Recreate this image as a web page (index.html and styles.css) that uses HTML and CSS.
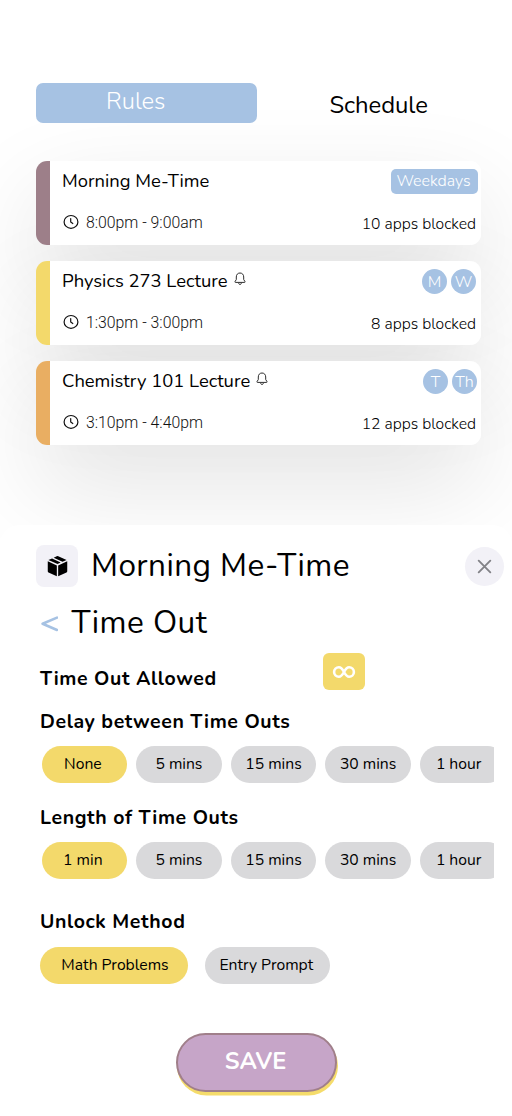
FILE: index.html
```html
<!DOCTYPE html>
<html lang="en">
<head>
<meta charset="utf-8">
<title>Rules</title>
<link rel="stylesheet" href="styles.css">
</head>
<body>
<svg class="defs" width="0" height="0">
  <symbol id="clock" viewBox="0 0 16 16"><ellipse cx="8" cy="7.9" rx="6.900" ry="6.4" fill="none" stroke="#111" stroke-width="1.2"/><path d="M7.7 4.5v3.4l2.1 1.6" fill="none" stroke="#111" stroke-width="1.2" stroke-linecap="round"/></symbol>
  <symbol id="bell" viewBox="0 0 12 14"><path d="M6 1C3.700 1 2.300 2.700 2.300 5v2.500L1 9.600c-.2.500 0 .8.500.8h9c.5 0 .7-.3.500-.8L9.700 7.500V5C9.700 2.700 8.300 1 6 1zM4.400 11.400c.3 1.200 2.900 1.200 3.200 0" fill="none" stroke="#222" stroke-width=".95" stroke-linejoin="round"/></symbol>
</svg>
<main class="screen">
  <nav class="tabs">
    <a class="tab tab-active">Rules</a>
    <a class="tab">Schedule</a>
  </nav>
  <section class="cards">
    <article class="card mauve">
      <h2 class="card-title">Morning Me-Time</h2>
      <div class="days"><span class="chip">Weekdays</span></div>
      <p class="time"><svg class="clock"><use href="#clock"/></svg>8:00pm - 9:00am</p>
      <p class="apps">10 apps blocked</p>
    </article>
    <article class="card yellow">
      <h2 class="card-title">Physics 273 Lecture<svg class="bell"><use href="#bell"/></svg></h2>
      <div class="days two"><span class="day">M</span><span class="day">W</span></div>
      <p class="time"><svg class="clock"><use href="#clock"/></svg>1:30pm - 3:00pm</p>
      <p class="apps">8 apps blocked</p>
    </article>
    <article class="card orange">
      <h2 class="card-title">Chemistry 101 Lecture<svg class="bell"><use href="#bell"/></svg></h2>
      <div class="days three"><span class="day">T</span><span class="day">Th</span></div>
      <p class="time"><svg class="clock"><use href="#clock"/></svg>3:10pm - 4:40pm</p>
      <p class="apps">12 apps blocked</p>
    </article>
  </section>
  <section class="sheet">
    <header class="sheet-head">
      <span class="box"><svg width="21" height="22" viewBox="0 0 22 23"><path d="M.8 6.600L10.300 10.900V22.200L1.600 18.200Q.8 17.800.8 17zM21.200 6.600L11.700 10.900V22.200L20.400 18.200Q21.200 17.800 21.200 17zM1.500 5.300L5.300 3.600 14.300 7.900 11 9.500zM7 2.800L10.200 1.200Q11 .8 11.800 1.200L20.500 5.300 16.200 7.100z" fill="#000"/></svg></span>
      <h1 class="sheet-title">Morning Me-Time</h1>
      <button class="close" aria-label="Close"><svg width="15" height="15" viewBox="0 0 16 16"><path d="M1.800 1.800l12.400 12.400M14.200 1.800L1.800 14.200" stroke="#828287" stroke-width="2" stroke-linecap="round"/></svg></button>
    </header>
    <div class="sub">
      <svg class="back" width="18" height="16" viewBox="0 0 18 16"><path d="M17 1.600L2.600 7.800l14.400 6.200" fill="none" stroke="#a6c2e3" stroke-width="2.600" stroke-linecap="round" stroke-linejoin="round"/></svg>
      <h2 class="sub-title">Time Out</h2>
    </div>
    <div class="allowed">
      <h3 class="heading h-allowed">Time Out Allowed</h3>
      <span class="infinity"><svg width="24" height="14" viewBox="0 0 24 14"><path d="M12 7C10.200 3.600 8.900 2.200 6.900 2.200a4.800 4.800 0 0 0 0 9.600C8.900 11.800 10.200 10.400 12 7s3.100-4.800 5.100-4.800a4.800 4.800 0 0 1 0 9.600C15.100 11.800 13.800 10.400 12 7z" fill="none" stroke="#fff" stroke-width="2.600"/></svg></span>
    </div>
    <h3 class="heading h-delay">Delay between Time Outs</h3>
    <div class="pills">
      <span class="pill on">None</span><span class="pill">5 mins</span><span class="pill">15 mins</span><span class="pill">30 mins</span><span class="pill last">1 hour</span>
    </div>
    <h3 class="heading h-length">Length of Time Outs</h3>
    <div class="pills">
      <span class="pill on">1 min</span><span class="pill">5 mins</span><span class="pill">15 mins</span><span class="pill">30 mins</span><span class="pill last">1 hour</span>
    </div>
    <h3 class="heading h-unlock">Unlock Method</h3>
    <div class="methods"><span class="pill on math">Math Problems</span><span class="pill entry">Entry Prompt</span></div>
    <button class="save">SAVE</button>
  </section>
</main>
</body>
</html>
```
FILE: styles.css
```css
* { box-sizing: border-box; }
body { margin: 0; background: #fff; color: #000; font-family: Nunito, Lato, sans-serif; }
h1, h2, h3, p { margin: 0; font-weight: 400; white-space: nowrap; }
button { border: 0; padding: 0; font-family: inherit; }
svg { display: block; flex: none; }
.defs { position: absolute; }
.screen { width: 512px; height: 1116px; overflow: hidden; position: relative; z-index: 0; }

.tabs { display: flex; height: 160.500px; padding: 83px 0 0 36px; }
.tab { width: 221px; height: 39.500px; font-size: 23.800px; line-height: 37px; }
.tab-active { background: #a6c2e3; color: #fff; border-radius: 7px; padding-left: 70px; font-weight: 350; }
.tab:last-child { padding: 4px 0 0 72.500px; letter-spacing: -.05px; }

.cards { display: flex; flex-direction: column; gap: 16px; height: 364.500px; padding-left: 36px; }
.card { position: relative; display: grid; grid-template: 40px 44px / 1fr auto; width: 445px; height: 84px; padding-left: 26px; border-radius: 11px; align-items: center; }
.card::before { content: ""; position: absolute; inset: 0; z-index: -2; border-radius: 11px; box-shadow: 0 38px 100px rgba(0, 0, 0, .12); }
.card::after { content: ""; position: absolute; inset: 0; z-index: -1; border-radius: 11px; background: linear-gradient(90deg, var(--stripe) 14px, #fff 14px); }
.mauve { --stripe: #9d7f89; }
.yellow { --stripe: #f3d96b; }
.orange { --stripe: #e9ae62; }
.card-title { display: flex; align-items: center; font-size: 18.400px; line-height: 24px; }
.bell { width: 12px; height: 14px; margin: -3px 0 0 6px; }
.time { display: flex; align-items: center; font: 300 15.800px/20px Roboto, sans-serif; color: #111; }
.clock { width: 16px; height: 16px; margin: -2px 7px 0 1px; }
.apps { padding: 2px 5px 0 0; font-size: 15.700px; font-weight: 350; line-height: 20px; color: #000; text-align: right; }
.days { display: flex; justify-content: flex-end; gap: 4px; padding-top: 1px; color: #fff; font-size: 16px; font-weight: 350; }
.days.two { padding-right: 5px; }
.days.three { padding-right: 4px; }
.chip { width: 87px; height: 25px; margin-right: 3px; padding-right: 2px; border-radius: 5px; background: #a6c2e3; line-height: 24px; text-align: center; }
.day { width: 25px; height: 25px; border-radius: 50%; background: #a6c2e3; line-height: 26px; text-align: center; }

.sheet { height: 591px; padding: 20px 0 0 36px; background: #fff; border-radius: 20px 20px 0 0; }
.sheet-head { display: flex; align-items: center; height: 42px; }
.box { display: grid; place-items: center; width: 42px; height: 42px; border-radius: 8px; background: #f2f1f7; }
.sheet-title { width: 374px; margin-left: 13px; font-size: 31.500px; line-height: 40px; letter-spacing: .45px; }
.close { display: grid; place-items: center; width: 39px; height: 39px; border-radius: 50%; background: #f2f1f7; }
.sub { display: flex; align-items: center; height: 66px; padding: 5px 0 0 4px; }
.back { margin-top: 3px; }
.sub-title { margin-left: 13.500px; font-size: 31.500px; line-height: 40px; letter-spacing: .5px; }
.allowed { display: flex; height: 55px; padding-left: 4px; }
.heading { height: 24px; font-size: 19.500px; line-height: 25px; font-weight: 700; letter-spacing: .6px; }
.h-allowed { width: 283px; margin-top: 12.500px; }
.infinity { display: grid; place-items: center; width: 42px; height: 36.500px; border-radius: 6px; background: #f3d96b; padding-top: 2px; }
.h-delay, .h-length, .h-unlock { margin-left: 4px; }
.h-delay { margin-top: 1px; }
.h-length { margin-top: 22px; }
.h-unlock { margin-top: 30px; }
.pills { display: flex; gap: 8.900px; width: 452.500px; margin: 13px 0 0 5.500px; overflow: hidden; }
.pill { flex: none; width: 85.700px; height: 37px; border-radius: 19px; background: #d9d9db; font-size: 15.700px; line-height: 37px; text-align: center; }
.pill.on { padding-right: 3px; background: #f3d96b; }
.pill.last { padding-right: 8px; }
.methods { display: flex; gap: 16.500px; margin: 14px 0 0 4px; }
.pill.math { width: 148px; padding: 0 0 0 2px; }
.pill.entry { width: 125.500px; padding: 0 2px 0 0; }
.save { display: block; width: 161px; height: 59.500px; margin: 48.500px 0 0 139.500px; border: 2.500px solid #a07f8a; border-radius: 30px; background: #c6a5c8; box-shadow: 1px 3.500px 0 #f5dc6b; color: #fff; font-size: 23.500px; font-weight: 700; line-height: 52px; padding: 0 1px 2px 0; }
```
